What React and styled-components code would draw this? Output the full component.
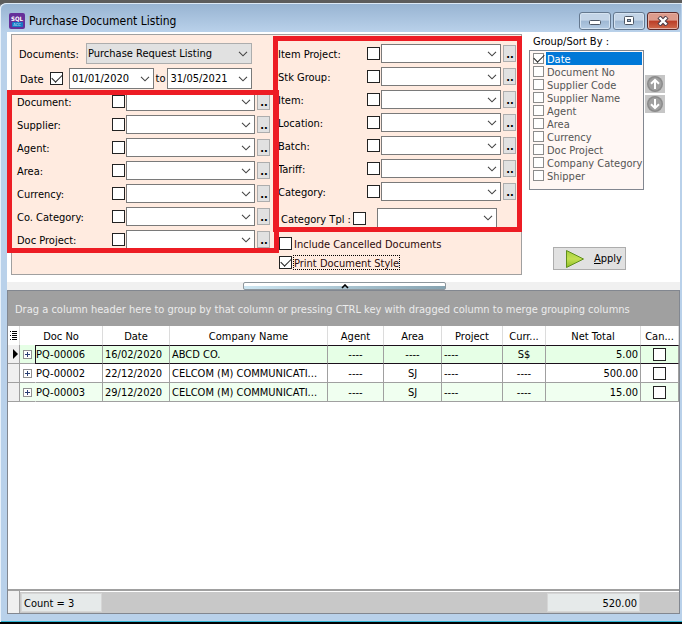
import React, { useState } from "react";
import styled, { createGlobalStyle } from "styled-components";

const GlobalStyle = createGlobalStyle`
  * {
    box-sizing: border-box;
  }
  body {
    margin: 0;
    background: #5c5c5c;
    color: #000;
    font-family: "DejaVu Sans Condensed", "Noto Sans", sans-serif;
    font-size: 11px;
    line-height: 13px;
  }
  button, input, select {
    font: inherit;
    color: inherit;
    margin: 0;
    padding: 0;
  }
`;

const Window = styled.div`
  display: flex;
  flex-direction: column;
  min-height: 100vh;
  padding: 0 2px 8px 7px;
  border-top: 3px solid #5c5c5c;
  border-bottom: 2px solid #000;
  border-radius: 7px 0 0 0;
  background: #b9d1ea;
  box-shadow: inset 1px 1px 0 #e8f1fa, inset 0 -1px 0 #2fb4d3;
`;

const TitleBar = styled.header`
  display: flex;
  align-items: center;
  height: 29px;
  margin: 0 -1px 0 -6px;
  padding: 5px 2px 0 8px;
  border-radius: 6px 0 0 0;
  background: linear-gradient(#98b4d2, #b9d1ea);
  border-top: 1px solid #dce9f6;
`;

const Title = styled.h1`
  flex: 1;
  margin: 0 0 0 4px;
  font-size: 12px;
  font-weight: normal;
  line-height: 16px;
`;

const WindowButtons = styled.div`
  display: flex;
  gap: 2px;
`;

const WindowButton = styled.button`
  display: grid;
  place-items: center;
  width: 32px;
  height: 18px;
  border: 1px solid ${(p) => (p.$close ? "#5b2a2a" : "#64788f")};
  border-radius: 3px;
  background: ${(p) =>
    p.$close
      ? "linear-gradient(#dd9b8c 0 45%, #bb3d27 50%, #cf6a4c)"
      : "linear-gradient(#c3d4e7 0 45%, #9fb8d3 50%, #b4cbe3)"};
  box-shadow: inset 0 0 0 1px ${(p) => (p.$close ? "#e6b0a4" : "#d5e3f1")};
`;

const Top = styled.section`
  display: flex;
  align-items: flex-start;
  padding: 2px 14px 7px 4px;
  background: #fff;
`;

const FilterPanel = styled.form`
  display: flex;
  width: 511px;
  height: 241px;
  border: 1px solid #a0a0a0;
  background: #ffebe0;
`;

const LeftFilters = styled.div`
  width: 261px;
  padding-top: 8px;
`;

const RightFilters = styled.div`
  flex: 1;
  padding-top: 9px;
`;

const FieldLabel = styled.label`
  padding-top: 2px;
  white-space: nowrap;
`;

const DocumentsRow = styled.div`
  display: flex;
  align-items: center;
  padding: 0 21px 0 7px;
  height: 21px;
  > :last-child {
    margin-left: auto;
    width: 166px;
  }
`;

const DateRow = styled.div`
  display: flex;
  align-items: center;
  gap: 2px;
  height: 21px;
  margin-top: 4px;
  padding: 0 21px 0 8px;
  > label {
    width: 28px;
  }
  > input {
    margin-right: 4px;
  }
  > span {
    flex: 1;
  }
`;

const FilterGroup = styled.div`
  position: relative;
  display: flex;
  flex-direction: column;
  gap: 4px;
  margin-top: ${(p) => p.$top || 0}px;
  padding-left: ${(p) => p.$left}px;
`;

/* red marker laid over a group of filters */
const Marker = styled.div`
  position: absolute;
  inset: ${(p) => p.$inset};
  border: 5px solid #ed1c24;
  pointer-events: none;
  z-index: 1;
`;

const FilterRow = styled.div`
  display: grid;
  grid-template-columns: ${(p) => p.$label}px 13px ${(p) => p.$field}px 15px;
  align-items: center;
  height: 19px;
  > :nth-child(3) {
    margin-left: 1px;
  }
  > :nth-child(4) {
    margin-left: 2px;
  }
`;

const TemplateRow = styled.div`
  display: grid;
  grid-template-columns: 72px 13px 131px;
  align-items: center;
  justify-content: start;
  height: 20px;
  margin-top: 3px;
  padding-left: 3px;
  > :last-child {
    margin-left: 11px;
  }
`;

const OptionRow = styled.div`
  display: flex;
  align-items: center;
  gap: 2px;
  height: 15px;
  margin: ${(p) => p.$top}px 0 0 6px;
`;

const FocusLabel = styled.label`
  outline: ${(p) => (p.$focused ? "1px dotted #000" : "none")};
  color: #2c0a0a;
  height: 13px;
  line-height: 15px;
`;

const Check = styled.input.attrs({ type: "checkbox" })`
  appearance: none;
  display: grid;
  place-items: center;
  flex: none;
  width: ${(p) => p.$size || 13}px;
  height: ${(p) => p.$size || 13}px;
  border: 1px solid ${(p) => (p.$soft ? "#8c8c8c" : "#222")};
  background: #fff;
  &:checked::after {
    content: "";
    width: 9px;
    height: 5px;
    margin-top: -3px;
    border-left: 1px solid #222;
    border-bottom: 1px solid #222;
    transform: rotate(-45deg);
  }
`;

const FieldBox = styled.span`
  display: grid;
  align-items: center;
  height: ${(p) => p.$height || 19}px;
  border: 1px solid ${(p) => (p.$grey ? "#adadad" : "#7a7a7a")};
  background: ${(p) => (p.$grey ? "#e1e1e1" : "#fff")};
  > * {
    grid-area: 1 / 1;
  }
  > svg {
    justify-self: end;
    margin-right: 3px;
    pointer-events: none;
  }
  > select, > input {
    appearance: none;
    width: 100%;
    min-width: 0;
    height: 100%;
    padding: 0 16px 0 ${(p) => (p.$grey ? 1 : 2)}px;
    border: 0;
    border-radius: 0;
    outline: none;
    background: transparent;
  }
`;

const MoreButton = styled.button`
  width: 13px;
  height: 17px;
  padding: 2px 0 0 1px;
  border: 1px solid #adadad;
  background: #e1e1e1;
  font-weight: bold;
  overflow: hidden;
`;

const SortPanel = styled.aside`
  display: flex;
  flex-direction: column;
  margin-left: 7px;
`;

const SortTitle = styled.h2`
  margin: 0 0 2px 4px;
  font-size: 11px;
  font-weight: normal;
  height: 14px;
  line-height: 16px;
`;

const SortBody = styled.div`
  display: flex;
`;

const SortList = styled.ul`
  width: 115px;
  height: 140px;
  margin: 0;
  padding: 1px;
  border: 1px solid #828790;
  background: #fff7f4;
  list-style: none;
`;

const SortItem = styled.li`
  display: flex;
  align-items: center;
  gap: 2px;
  height: 13px;
  padding-left: 2px;
  label {
    flex: 1;
    height: 13px;
    line-height: 15px;
    padding-left: 1px;
    white-space: nowrap;
    background: ${(p) => (p.$selected ? "#0078d7" : "transparent")};
    color: ${(p) => (p.$selected ? "#fff" : "#555")};
  }
`;

const MoveButtons = styled.div`
  display: flex;
  flex-direction: column;
  gap: 2px;
  padding: 25px 0 0 1px;
`;

const MoveButton = styled.button`
  display: grid;
  place-items: center;
  width: 20px;
  height: 18px;
  border: 0;
  background: #c6c6c6;
`;

const ApplyButton = styled.button`
  display: flex;
  align-items: center;
  gap: 9px;
  width: 73px;
  height: 23px;
  margin: 57px 0 0 24px;
  padding-left: 11px;
  border: 1px solid #adadad;
  background: #e1e1e1;
  u {
    text-underline-offset: 1px;
  }
`;

const Splitter = styled.div`
  display: flex;
  justify-content: center;
  height: 8px;
  background: #f0f0f0;
`;

const SplitterHandle = styled.button`
  display: grid;
  place-items: center;
  width: 203px;
  height: 8px;
  margin-left: 2px;
  border: 1px solid #8e979d;
  border-radius: 2px;
  background: linear-gradient(#fff 0 50%, transparent 50%),
    linear-gradient(90deg, #cde6f2, #86a3b1);
`;

const Grid = styled.section`
  flex: 1;
  display: flex;
  flex-direction: column;
  border: 1px solid #828790;
  background: #fff;
`;

const GroupBar = styled.div`
  height: 35px;
  padding: 12px 7px 0;
  background: #a0a0a0;
  color: #ececec;
  white-space: nowrap;
  overflow: hidden;
`;

const Table = styled.table`
  width: 100%;
  table-layout: fixed;
  border-collapse: separate;
  border-spacing: 0;
  th, td {
    height: 19px;
    padding: 0 2px;
    font-weight: normal;
    white-space: nowrap;
    overflow: hidden;
  }
  th {
    padding-top: 1px;
    border-right: 1px solid #dcdcdc;
  }
  th svg, td svg {
    display: block;
    margin: 0 auto;
  }
`;

const Row = styled.tr`
  background: ${(p) => p.$tint};
  td {
    border-right: 1px solid #a0a0a0;
    border-bottom: 1px solid ${(p) => (p.$current ? "#1b0f1b" : "#a0a0a0")};
    border-top: ${(p) => (p.$current ? "1px solid #1b0f1b" : "0")};
  }
  td:first-child {
    padding: 0 0 0 2px;
    border-top: 0;
    border-bottom-color: #a0a0a0;
    background: #f0f0f0;
  }
  td:nth-child(2) {
    padding: 0 0 0 3px;
    border-right: 0;
    border-top: 0;
    border-bottom-color: #a0a0a0;
  }
  td:nth-child(3) {
    padding-left: 0;
    border-left: 1px solid ${(p) => (p.$current ? "#1b0f1b" : "transparent")};
  }
`;

const Cell = styled.td`
  text-align: ${(p) => p.$align || "left"};
  input {
    margin: 0 auto;
  }
`;

const ExpandButton = styled.button`
  display: grid;
  place-items: center;
  width: 9px;
  height: 9px;
  border: 1px solid #919191;
  background: #fff;
`;

const Footer = styled.footer`
  display: grid;
  grid-template-columns: 12px 82px 1fr 93px 39px;
  align-items: center;
  height: 24px;
  margin-top: auto;
  border-top: 2px solid #a0a0a0;
  background: #c8c8c8;
  box-shadow: inset 0 1px 0 #fff;
`;

const FooterCorner = styled.span`
  align-self: stretch;
  border-right: 1px solid #a0a0a0;
  background: #f0f0f0;
`;

const Summary = styled.output`
  grid-column: ${(p) => p.$column};
  height: 19px;
  margin-left: ${(p) => (p.$right ? 0 : 1)}px;
  padding: 3px 2px 1px;
  border: 1px solid #d6d6d6;
  background: #e6eaea;
  text-align: ${(p) => (p.$right ? "right" : "left")};
`;

const leftFilters = ["Document", "Supplier", "Agent", "Area", "Currency", "Co. Category", "Doc Project"];
const rightFilters = ["Item Project", "Stk Group", "Item", "Location", "Batch", "Tariff", "Category"];
const sortFields = [
  "Date", "Document No", "Supplier Code", "Supplier Name", "Agent",
  "Area", "Currency", "Doc Project", "Company Category", "Shipper",
];

const rows = [
  { doc: "PQ-00006", date: "16/02/2020", company: "ABCD CO.", agent: "----", area: "----", project: "----", curr: "S$", total: "5.00" },
  { doc: "PQ-00002", date: "22/12/2020", company: "CELCOM (M) COMMUNICATI...", agent: "----", area: "SJ", project: "----", curr: "----", total: "500.00" },
  { doc: "PQ-00003", date: "29/12/2020", company: "CELCOM (M) COMMUNICATI...", agent: "----", area: "SJ", project: "----", curr: "----", total: "15.00" },
];
const tints = ["#e6ffe6", "#ffffff", "#f0fff0"];

function Chevron() {
  return (
    <svg width="10" height="6" viewBox="0 0 10 6" fill="none" stroke="#444" strokeWidth="1.1">
      <path d="M1 0.8 L5 4.8 L9 0.8" />
    </svg>
  );
}

function AppLogo() {
  return (
    <svg width="16" height="16" viewBox="0 0 16 16" aria-hidden="true">
      <rect width="16" height="16" rx="2" fill="#65309a" />
      <text x="8" y="8" textAnchor="middle" fontSize="6" fontWeight="bold" fill="#fff">SQL</text>
      <rect x="3" y="9" width="11" height="5" rx="1" fill="#1679c4" />
      <text x="8" y="13" textAnchor="middle" fontSize="4" fill="#d8efff">ACC</text>
    </svg>
  );
}

function Filter({ name, label, field }) {
  const id = name.replace(/\W/g, "");
  return (
    <FilterRow $label={label} $field={field}>
      <FieldLabel htmlFor={id}>{name}:</FieldLabel>
      <Check id={id} />
      <FieldBox>
        <select aria-label={name} />
        <Chevron />
      </FieldBox>
      <MoreButton type="button" aria-label={`Browse ${name}`}>..</MoreButton>
    </FilterRow>
  );
}

function DateField({ label, value }) {
  const [date, setDate] = useState(value);
  return (
    <FieldBox $height={21}>
      <input type="text" aria-label={label} value={date} onChange={(e) => setDate(e.target.value)} />
      <Chevron />
    </FieldBox>
  );
}

function Arrow({ down }) {
  return (
    <svg width="18" height="18" viewBox="0 0 18 18">
      <circle cx="9" cy="9" r="8" fill="#8b8b8b" />
      <circle cx="9" cy="9" r="6.5" fill="#a0a0a0" />
      <path
        d={down ? "M9 4 V13 M5 9.2 L9 13.2 L13 9.2" : "M9 14 V5 M5 8.8 L9 4.8 L13 8.8"}
        fill="none"
        stroke="#fff"
        strokeWidth="2"
      />
    </svg>
  );
}

export default function App() {
  const [sorted, setSorted] = useState(["Date"]);

  const toggleSort = (field) => {
    setSorted(sorted.includes(field) ? sorted.filter((f) => f !== field) : [...sorted, field]);
  };

  return (
    <>
      <GlobalStyle />
      <Window>
        <TitleBar>
          <AppLogo />
          <Title>Purchase Document Listing</Title>
          <WindowButtons>
            <WindowButton aria-label="Minimize">
              <svg width="12" height="10" viewBox="0 0 12 10">
                <rect x="0.5" y="4.5" width="11" height="4" rx="1" fill="#fff" stroke="#4c5665" />
              </svg>
            </WindowButton>
            <WindowButton aria-label="Maximize">
              <svg width="12" height="10" viewBox="0 0 12 10">
                <rect x="1.5" y="0.5" width="9" height="8" rx="1" fill="#fff" stroke="#4c5665" />
                <rect x="4.5" y="3.5" width="3" height="2" fill="#9fb8d3" stroke="#4c5665" />
              </svg>
            </WindowButton>
            <WindowButton $close aria-label="Close">
              <svg width="12" height="10" viewBox="0 0 12 10">
                <path d="M2 1 L10 9 M10 1 L2 9" stroke="#4a3b47" strokeWidth="4.4" />
                <path d="M2.5 1.5 L9.5 8.5 M9.5 1.5 L2.5 8.5" stroke="#fff" strokeWidth="2.4" />
              </svg>
            </WindowButton>
          </WindowButtons>
        </TitleBar>

        <Top>
          <FilterPanel onSubmit={(e) => e.preventDefault()}>
            <LeftFilters>
              <DocumentsRow>
                <FieldLabel htmlFor="documents">Documents:</FieldLabel>
                <FieldBox $grey $height={21}>
                  <select id="documents">
                    <option>Purchase Request Listing</option>
                  </select>
                  <Chevron />
                </FieldBox>
              </DocumentsRow>
              <DateRow>
                <FieldLabel htmlFor="useDate">Date</FieldLabel>
                <Check id="useDate" defaultChecked />
                <DateField label="Date from" value="01/01/2020" />
                <div>to</div>
                <DateField label="Date to" value="31/05/2021" />
              </DateRow>
              <FilterGroup $top={3} $left={5}>
                <Marker $inset="-2px -6px -4px -5px" />
                {leftFilters.map((name) => (
                  <Filter key={name} name={name} label={95} field={130} />
                ))}
              </FilterGroup>
            </LeftFilters>
            <RightFilters>
              <FilterGroup $left={5}>
                <Marker $inset="-8px -1px -4px 0" />
                {rightFilters.map((name) => (
                  <Filter key={name} name={name} label={89} field={121} />
                ))}
                <TemplateRow>
                  <FieldLabel htmlFor="categoryTpl">Category Tpl :</FieldLabel>
                  <Check id="categoryTpl" />
                  <FieldBox $height={20}>
                    <select aria-label="Category template" />
                    <Chevron />
                  </FieldBox>
                </TemplateRow>
              </FilterGroup>
              <OptionRow $top={8}>
                <Check id="cancelled" />
                <FocusLabel htmlFor="cancelled">Include Cancelled Documents</FocusLabel>
              </OptionRow>
              <OptionRow $top={4}>
                <Check id="printStyle" defaultChecked />
                <FocusLabel htmlFor="printStyle" $focused>Print Document Style</FocusLabel>
              </OptionRow>
            </RightFilters>
          </FilterPanel>

          <SortPanel>
            <SortTitle>Group/Sort By :</SortTitle>
            <SortBody>
              <SortList>
                {sortFields.map((field) => {
                  const id = "sort" + field.replace(/\W/g, "");
                  return (
                    <SortItem key={field} $selected={field === "Date"}>
                      <Check
                        id={id}
                        $size={11}
                        $soft
                        checked={sorted.includes(field)}
                        onChange={() => toggleSort(field)}
                      />
                      <label htmlFor={id}>{field}</label>
                    </SortItem>
                  );
                })}
              </SortList>
              <MoveButtons>
                <MoveButton aria-label="Move up"><Arrow /></MoveButton>
                <MoveButton aria-label="Move down"><Arrow down /></MoveButton>
              </MoveButtons>
            </SortBody>
            <ApplyButton>
              <svg width="20" height="20" viewBox="0 0 20 20">
                <defs>
                  <linearGradient id="play" x1="0" y1="0" x2="0" y2="1">
                    <stop offset="0" stopColor="#a5cf3c" />
                    <stop offset="0.5" stopColor="#c3e052" />
                    <stop offset="1" stopColor="#8fbd22" />
                  </linearGradient>
                </defs>
                <path d="M1.5 1.5 L18.5 10 L1.5 18.5 Z" fill="url(#play)" stroke="#5f8f1c" strokeLinejoin="round" />
              </svg>
              <span><u>A</u>pply</span>
            </ApplyButton>
          </SortPanel>
        </Top>

        <Splitter>
          <SplitterHandle aria-label="Collapse filters">
            <svg width="8" height="5" viewBox="0 0 8 5" fill="none" stroke="#000" strokeWidth="1.6">
              <path d="M1 4 L4 1 L7 4" />
            </svg>
          </SplitterHandle>
        </Splitter>

        <Grid>
          <GroupBar>
            Drag a column header here to group by that column or pressing CTRL key with dragged column to merge grouping columns
          </GroupBar>
          <Table>
            <colgroup>
              <col style={{ width: 12 }} />
              <col style={{ width: 15 }} />
              <col style={{ width: 68 }} />
              <col style={{ width: 67 }} />
              <col />
              <col style={{ width: 56 }} />
              <col style={{ width: 58 }} />
              <col style={{ width: 61 }} />
              <col style={{ width: 43 }} />
              <col style={{ width: 95 }} />
              <col style={{ width: 38 }} />
            </colgroup>
            <thead>
              <tr>
                <th>
                  <svg width="8" height="10" viewBox="0 0 8 10" stroke="#000" shapeRendering="crispEdges">
                    <path d="M0 0.5 H1 M2 0.5 H7 M2 2.5 H7 M0 4.5 H1 M2 4.5 H7 M2 6.5 H7 M0 8.5 H1 M2 8.5 H7" />
                  </svg>
                </th>
                <th colSpan="2">Doc No</th>
                <th>Date</th>
                <th>Company Name</th>
                <th>Agent</th>
                <th>Area</th>
                <th>Project</th>
                <th>Curr...</th>
                <th>Net Total</th>
                <th>Can...</th>
              </tr>
            </thead>
            <tbody>
              {rows.map((row, i) => (
                <Row key={row.doc} $tint={tints[i]} $current={i === 0}>
                  <td>
                    {i === 0 && (
                      <svg width="6" height="10" viewBox="0 0 6 10"><path d="M1 0 L6 5 L1 10 Z" /></svg>
                    )}
                  </td>
                  <td>
                    <ExpandButton aria-label={`Expand ${row.doc}`}>
                      <svg width="5" height="5" viewBox="0 0 5 5" stroke="#2b3f73" shapeRendering="crispEdges">
                        <path d="M0 2.5 H5 M2.5 0 V5" />
                      </svg>
                    </ExpandButton>
                  </td>
                  <Cell>{row.doc}</Cell>
                  <Cell>{row.date}</Cell>
                  <Cell>{row.company}</Cell>
                  <Cell $align="center">{row.agent}</Cell>
                  <Cell $align="center">{row.area}</Cell>
                  <Cell>{row.project}</Cell>
                  <Cell $align="center">{row.curr}</Cell>
                  <Cell $align="right">{row.total}</Cell>
                  <Cell><Check aria-label={`${row.doc} cancelled`} /></Cell>
                </Row>
              ))}
            </tbody>
          </Table>
          <Footer>
            <FooterCorner />
            <Summary $column={2}>Count = 3</Summary>
            <Summary $column={4} $right>520.00</Summary>
          </Footer>
        </Grid>
      </Window>
    </>
  );
}
